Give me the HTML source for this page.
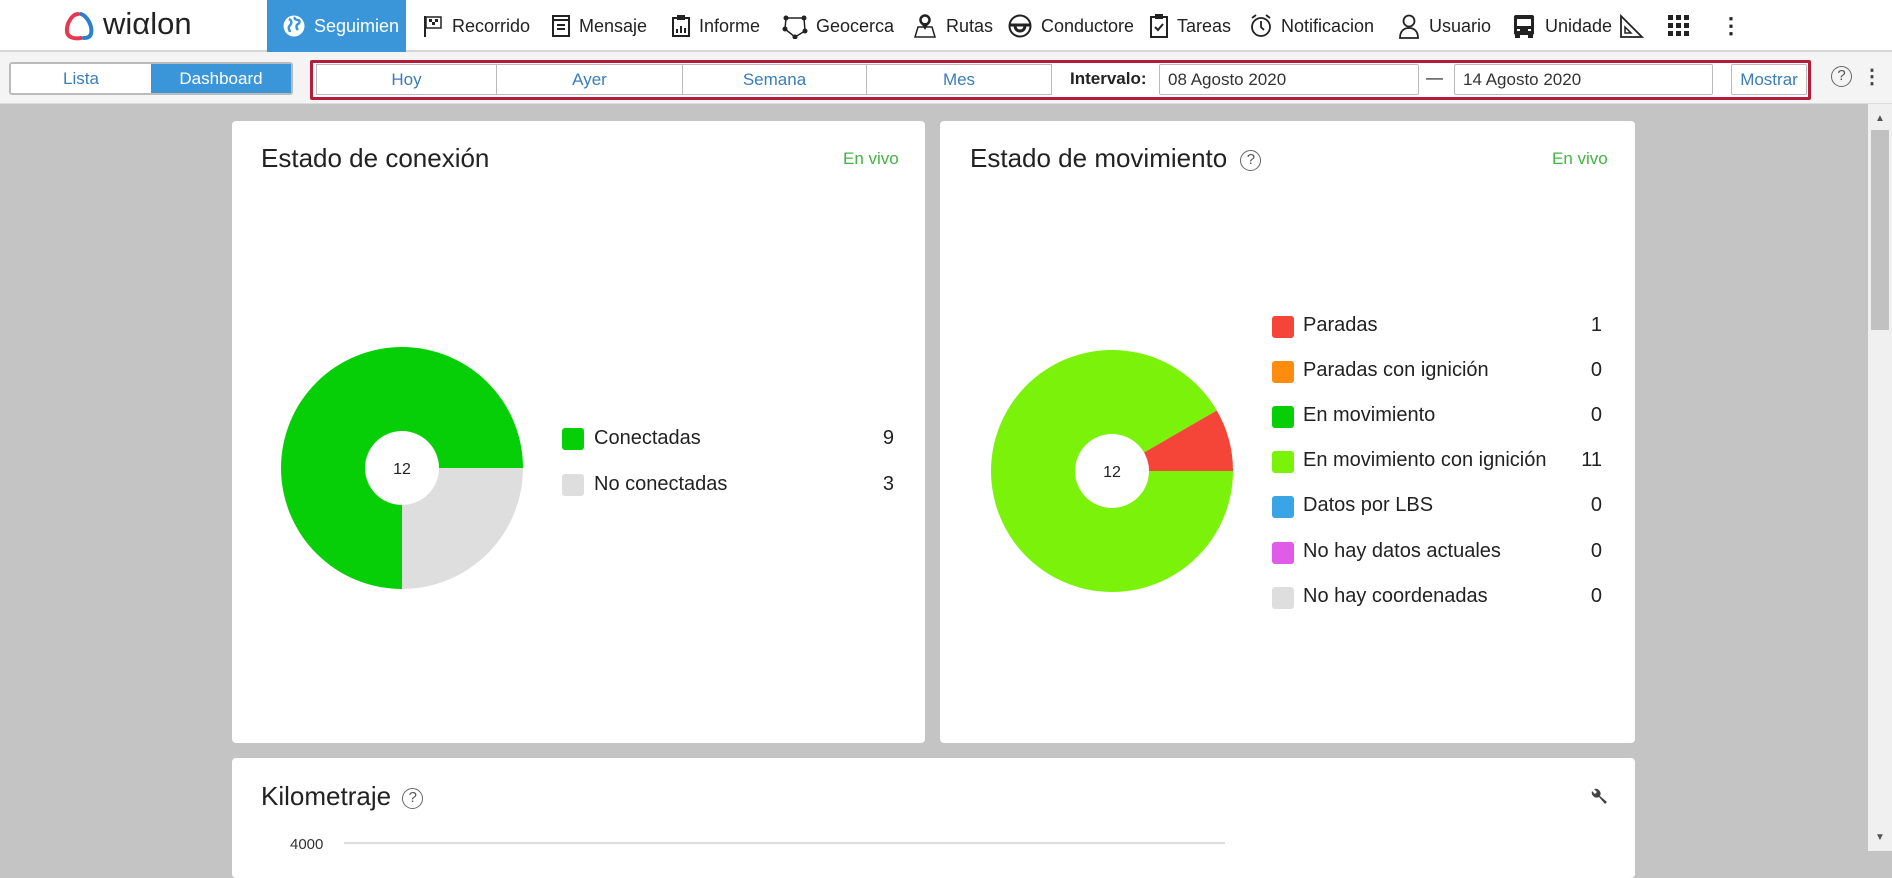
<!DOCTYPE html>
<html><head><meta charset="utf-8">
<style>
*{box-sizing:border-box;margin:0;padding:0}
body{width:1892px;height:851px;overflow:hidden;background:#c4c4c4;font-family:"Liberation Sans",sans-serif;position:relative;color:#222}
.abs{position:absolute}
#top{left:0;top:0;width:1892px;height:52px;background:#fff;border-bottom:2px solid #d6d6d6}
.nav{top:0;height:52px;display:flex;align-items:center;font-size:18px;color:#222;white-space:nowrap;overflow:hidden}
.nav svg{flex:none;margin-right:8px}
#bar2{left:0;top:52px;width:1892px;height:52px;background:#f4f4f4;border-bottom:1px solid #ddd}
.btn{position:absolute;display:flex;align-items:center;justify-content:center;font-size:17px;color:#3a7db8;background:#fff;border:1px solid #bbb}
.inp{position:absolute;display:flex;align-items:center;padding-left:8px;font-size:17px;color:#333;background:#fff;border:1px solid #bbb;border-radius:2px}
.card{position:absolute;background:#fff;border-radius:4px}
.title{position:absolute;font-size:26px;color:#222}
.live{position:absolute;font-size:17px;color:#43b343}
.lg{position:absolute;font-size:20px;color:#222}
.sq{position:absolute;width:22px;height:22px;border-radius:3px}
.num{position:absolute;font-size:20px;text-align:right;width:40px}
.q{display:inline-block;width:21px;height:21px;border:1.5px solid #666;border-radius:50%;font-size:15px;text-align:center;line-height:18px;color:#555;vertical-align:middle}
</style></head><body>
<div id="top" class="abs"></div>
<div class="abs" style="left:63px;top:10px;width:150px;height:32px">
<svg width="34" height="32" viewBox="0 0 34 32" class="abs" style="left:0;top:0"><path d="M15 4 C9 4 3 14 4 22 C5 28 12 29 18 28" stroke="#e8384f" stroke-width="4" fill="none" stroke-linecap="round"/><path d="M18 4 C24 6 30 16 28 24 C27 27 24 28 21 28" stroke="#2a7fcf" stroke-width="4" fill="none" stroke-linecap="round"/></svg>
<span class="abs" style="left:40px;top:-4px;font-size:31px;color:#222">wiαlon</span>
</div>
<div class="abs" style="left:267px;top:0;width:139px;height:52px;background:#3a96d9"></div>
<div class="nav abs" style="left:282px;width:124px;color:#fff">
<svg width="24" height="24" viewBox="0 0 24 24"><circle cx="12" cy="12" r="10.5" fill="#fff"/><path d="M7 5c2 1 3 3 2 5s-3 2-2 5l1 3M13 3c-1 2 1 3 3 3s2 3 0 4-2 4 0 6" stroke="#3a96d9" stroke-width="2.5" fill="none"/></svg>Seguimien</div>
<div class="nav abs" style="left:422px;width:112px"><svg width="22" height="24" viewBox="0 0 22 24"><path d="M3 2v21" stroke="#222" stroke-width="2"/><rect x="4" y="3" width="15" height="11" fill="none" stroke="#222" stroke-width="1.5"/><path d="M7 5h3v3H7zM13 5h3v3h-3zM10 8h3v3h-3z" fill="#222"/></svg>Recorrido</div>
<div class="nav abs" style="left:551px;width:103px"><svg width="20" height="24" viewBox="0 0 20 24"><rect x="2" y="2" width="16" height="20" fill="none" stroke="#222" stroke-width="2"/><path d="M2 6h16M6 11h8M6 15h8" stroke="#222" stroke-width="2"/></svg>Mensaje</div>
<div class="nav abs" style="left:671px;width:94px"><svg width="20" height="24" viewBox="0 0 20 24"><rect x="2" y="4" width="16" height="18" fill="none" stroke="#222" stroke-width="2"/><rect x="6" y="1" width="8" height="5" fill="#222"/><path d="M6 19v-4M10 19v-7M14 19v-5" stroke="#222" stroke-width="2"/></svg>Informe</div>
<div class="nav abs" style="left:782px;width:115px"><svg width="26" height="26" viewBox="0 0 26 26"><path d="M4 5l18 0 1 13-10 6-10-8z" fill="none" stroke="#222" stroke-width="1.5"/><circle cx="4" cy="5" r="2.5" fill="#222"/><circle cx="22" cy="5" r="2.5" fill="#222"/><circle cx="23" cy="18" r="2.5" fill="#222"/><circle cx="13" cy="24" r="2.5" fill="#222"/><circle cx="3" cy="16" r="2.5" fill="#222"/></svg>Geocerca</div>
<div class="nav abs" style="left:912px;width:92px"><svg width="26" height="26" viewBox="0 0 26 26"><path d="M3 24l3-10h14l3 10z" fill="none" stroke="#222" stroke-width="1.5"/><circle cx="13" cy="7" r="4.5" fill="none" stroke="#222" stroke-width="2.5"/><path d="M9 10l4 7 4-7" fill="#222"/></svg>Rutas</div>
<div class="nav abs" style="left:1007px;width:126px"><svg width="26" height="26" viewBox="0 0 26 26"><circle cx="13" cy="13" r="10.5" fill="none" stroke="#222" stroke-width="2"/><path d="M3 12h20M8 12c0 5 3 6 5 6s5-1 5-6" stroke="#222" stroke-width="3" fill="none"/></svg>Conductore</div>
<div class="nav abs" style="left:1149px;width:83px"><svg width="20" height="26" viewBox="0 0 20 26"><rect x="2" y="4" width="16" height="20" fill="none" stroke="#222" stroke-width="2"/><rect x="6" y="1" width="8" height="5" fill="#222"/><path d="M6 14l3 3 5-6" stroke="#222" stroke-width="2" fill="none"/></svg>Tareas</div>
<div class="nav abs" style="left:1249px;width:130px"><svg width="24" height="26" viewBox="0 0 24 26"><circle cx="12" cy="14" r="9" fill="none" stroke="#222" stroke-width="1.8"/><path d="M12 8v6l3 3M3 5l4-3M21 5l-4-3" stroke="#222" stroke-width="1.8" fill="none"/></svg>Notificacion</div>
<div class="nav abs" style="left:1397px;width:98px"><svg width="24" height="26" viewBox="0 0 24 26"><circle cx="12" cy="8" r="5.5" fill="none" stroke="#222" stroke-width="1.8"/><path d="M3 25c0-7 4-10 9-10s9 3 9 10z" fill="none" stroke="#222" stroke-width="1.8"/></svg>Usuario</div>
<div class="nav abs" style="left:1511px;width:104px"><svg width="26" height="26" viewBox="0 0 26 26"><rect x="3" y="2" width="20" height="20" rx="2" fill="#222"/><rect x="6" y="6" width="14" height="7" fill="#fff"/><rect x="4" y="21" width="5" height="4" fill="#222"/><rect x="17" y="21" width="5" height="4" fill="#222"/><rect x="6" y="16" width="3" height="2" fill="#fff"/><rect x="17" y="16" width="3" height="2" fill="#fff"/></svg>Unidade</div>
<div class="nav abs" style="left:1618px;width:30px"><svg width="26" height="26" viewBox="0 0 26 26"><path d="M3 24V3l21 21z" fill="none" stroke="#222" stroke-width="1.8"/><path d="M7 20v-6l6 6z" fill="none" stroke="#222" stroke-width="1.5"/></svg></div>
<div class="nav abs" style="left:1666px;width:30px"><svg width="26" height="26" viewBox="0 0 26 26" fill="#222"><rect x="2" y="2" width="5" height="5"/><rect x="10" y="2" width="5" height="5"/><rect x="18" y="2" width="5" height="5"/><rect x="2" y="10" width="5" height="5"/><rect x="10" y="10" width="5" height="5"/><rect x="18" y="10" width="5" height="5"/><rect x="2" y="18" width="5" height="5"/><rect x="10" y="18" width="5" height="5"/><rect x="18" y="18" width="5" height="5"/></svg></div>
<div class="nav abs" style="left:1720px;width:20px;font-size:22px;font-weight:bold">⋮</div>

<div id="bar2" class="abs"></div>
<div class="abs" style="left:9px;top:62px;width:284px;height:33px;border:2px solid #bbb;border-radius:3px;background:#fff"></div>
<div class="abs" style="left:11px;top:64px;width:140px;height:29px;display:flex;align-items:center;justify-content:center;font-size:17px;color:#3a7db8">Lista</div>
<div class="abs" style="left:151px;top:64px;width:140px;height:29px;background:#3a96d9;display:flex;align-items:center;justify-content:center;font-size:17px;color:#fff">Dashboard</div>
<div class="abs" style="left:310px;top:60px;width:1501px;height:40px;border:3px solid #b51c3a;border-radius:2px;background:#fff"></div>
<div class="btn" style="left:316px;top:64px;width:181px;height:31px">Hoy</div>
<div class="btn" style="left:496px;top:64px;width:187px;height:31px">Ayer</div>
<div class="btn" style="left:682px;top:64px;width:185px;height:31px">Semana</div>
<div class="btn" style="left:866px;top:64px;width:186px;height:31px">Mes</div>
<div class="abs" style="left:1070px;top:69px;font-size:17px;font-weight:bold;color:#222">Intervalo:</div>
<div class="inp" style="left:1159px;top:64px;width:260px;height:31px">08 Agosto 2020</div>
<div class="abs" style="left:1426px;top:68px;font-size:17px">—</div>
<div class="inp" style="left:1454px;top:64px;width:259px;height:31px">14 Agosto 2020</div>
<div class="btn" style="left:1731px;top:64px;width:76px;height:31px;border-radius:2px">Mostrar</div>
<div class="abs" style="left:1831px;top:66px"><span class="q">?</span></div>
<div class="abs" style="left:1862px;top:64px;font-size:20px;color:#444;font-weight:bold">⋮</div>

<div class="abs" style="left:1868px;top:104px;width:24px;height:747px;background:#f0f0f0"></div>
<div class="abs" style="left:1871px;top:130px;width:18px;height:200px;background:#c1c1c1"></div>
<div class="abs" style="left:1875px;top:113px;font-size:10px;color:#555">▲</div>
<div class="abs" style="left:1875px;top:832px;font-size:10px;color:#555">▼</div>

<div class="card" style="left:232px;top:121px;width:693px;height:622px"></div>
<div class="title" style="left:261px;top:143px">Estado de conexión</div>
<div class="live" style="left:843px;top:149px">En vivo</div>
<svg class="abs" style="left:281px;top:347px" width="242" height="242" viewBox="0 0 242 242">
<path d="M121 121 L242 121 A121 121 0 0 1 121 242 Z" fill="#dedede"/>
<path d="M121 121 L121 242 A121 121 0 1 1 242 121 Z" fill="#07cf07"/>
<circle cx="121" cy="121" r="37" fill="#fff"/>
<text x="121" y="127" font-size="16" text-anchor="middle" font-family="Liberation Sans" fill="#222">12</text></svg>
<div class="sq" style="left:562px;top:428px;background:#07cf07"></div>
<div class="lg" style="left:594px;top:427px">Conectadas</div>
<div class="num" style="left:854px;top:427px">9</div>
<div class="sq" style="left:562px;top:474px;background:#dedede"></div>
<div class="lg" style="left:594px;top:473px">No conectadas</div>
<div class="num" style="left:854px;top:473px">3</div>

<div class="card" style="left:940px;top:121px;width:695px;height:622px"></div>
<div class="title" style="left:970px;top:143px">Estado de movimiento <span class="q" style="margin-left:6px">?</span></div>
<div class="live" style="left:1552px;top:149px">En vivo</div>
<svg class="abs" style="left:991px;top:350px" width="242" height="242" viewBox="0 0 242 242">
<path d="M121 121 L242 121 A121 121 0 1 1 225.8 60.5 Z" fill="#7af20a"/>
<path d="M121 121 L225.8 60.5 A121 121 0 0 1 242 121 Z" fill="#f44538"/>
<circle cx="121" cy="121" r="37" fill="#fff"/>
<text x="121" y="127" font-size="16" text-anchor="middle" font-family="Liberation Sans" fill="#222">12</text></svg>
<div class="sq" style="left:1272px;top:316px;background:#f44538"></div><div class="lg" style="left:1303px;top:314px">Paradas</div><div class="num" style="left:1562px;top:314px">1</div>
<div class="sq" style="left:1272px;top:361px;background:#ff8c0e"></div><div class="lg" style="left:1303px;top:359px">Paradas con ignición</div><div class="num" style="left:1562px;top:359px">0</div>
<div class="sq" style="left:1272px;top:406px;background:#07cf07"></div><div class="lg" style="left:1303px;top:404px">En movimiento</div><div class="num" style="left:1562px;top:404px">0</div>
<div class="sq" style="left:1272px;top:451px;background:#7af20a"></div><div class="lg" style="left:1303px;top:449px">En movimiento con ignición</div><div class="num" style="left:1562px;top:449px">11</div>
<div class="sq" style="left:1272px;top:496px;background:#39a5e6"></div><div class="lg" style="left:1303px;top:494px">Datos por LBS</div><div class="num" style="left:1562px;top:494px">0</div>
<div class="sq" style="left:1272px;top:542px;background:#e05be8"></div><div class="lg" style="left:1303px;top:540px">No hay datos actuales</div><div class="num" style="left:1562px;top:540px">0</div>
<div class="sq" style="left:1272px;top:587px;background:#dedede"></div><div class="lg" style="left:1303px;top:585px">No hay coordenadas</div><div class="num" style="left:1562px;top:585px">0</div>

<div class="card" style="left:232px;top:758px;width:1403px;height:120px"></div>
<div class="title" style="left:261px;top:781px">Kilometraje <span class="q" style="margin-left:4px">?</span></div>
<svg class="abs" style="left:1589px;top:787px" width="20" height="20" viewBox="0 0 20 20"><path d="M3 4a5 5 0 0 0 7 6l6 7 2-2-7-6a5 5 0 0 0-6-7l3 3-2 2z" fill="#444"/></svg>
<div class="abs" style="left:290px;top:836px;font-size:15px;color:#333">4000</div>
<div class="abs" style="left:344px;top:842px;width:881px;height:2px;background:#ddd"></div>
</body></html>
